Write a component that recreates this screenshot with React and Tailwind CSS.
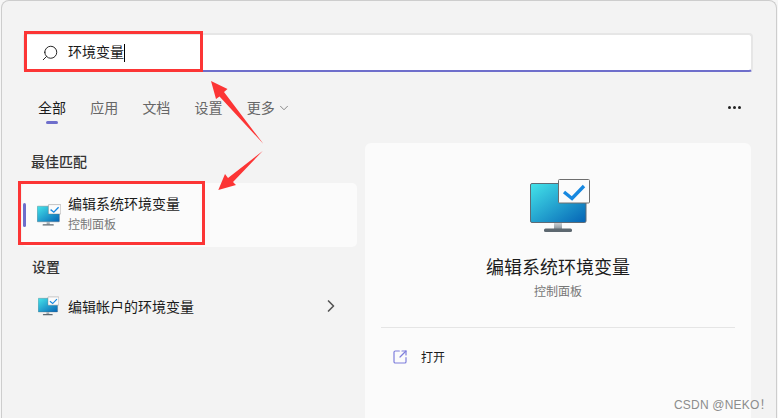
import React from 'react';
import { ChevronDown, ChevronRight, Search, SquareArrowOutUpRight } from 'lucide-react';

function MonitorIcon({ id, className }) {
  return (
    <svg viewBox="0 0 60 53" className={className}>
      <defs>
        <linearGradient id={id} x1="0" y1="0" x2="1" y2="1">
          <stop offset="0" stopColor="#44e4ea" />
          <stop offset="1" stopColor="#0563b5" />
        </linearGradient>
        <linearGradient id={id + 's'} x1="0" y1="0" x2="0" y2="1">
          <stop offset="0" stopColor="#d6dadd" />
          <stop offset="1" stopColor="#8a949c" />
        </linearGradient>
      </defs>
      <rect x="24" y="43" width="8" height="7" fill={`url(#${id}s)`} />
      <rect x="14" y="49.5" width="28" height="3.5" rx="1.5" fill="#5d6870" />
      <rect x="0.5" y="4.5" width="55.5" height="39" rx="1.5" fill={`url(#${id})`} stroke="#5f6b75" />
      <rect x="28.5" y="0.5" width="31" height="23.5" rx="1" fill="#fbfbfb" stroke="#6e6e6e" />
      <path d="M34 13l8 6.5 12-12.5" fill="none" stroke="#1788e0" strokeWidth="3.4" />
    </svg>
  );
}

function App() {
  const tabs = ['应用', '文档', '设置'];

  return (
    <div
      className="relative w-[778px] h-[418px] overflow-hidden bg-[#f6f6f6] text-[14px] text-[#1b1b1b]"
      style={{ fontFamily: '"Noto Sans CJK SC", "Noto Sans", sans-serif' }}
    >
      <div className="w-[776px] h-[418px] ml-px border border-b-0 border-[#cdcdcd] rounded-t-lg bg-[#f3f3f3] pt-[32px] pl-[21px]">
        {/* search box */}
        <div className="w-[730px] h-[39px] flex items-center pl-[16px] bg-white rounded-[4px] border-2 border-[#e6e6e6] border-b-[#6e6ecb]">
          <Search size={18} strokeWidth={1.3} className="-scale-x-100 text-[#222]" />
          <span className="ml-[9px] mb-[3px] text-[14px] leading-none">环境变量</span>
          <span className="w-px h-[18px] bg-black" />
        </div>

        {/* tabs */}
        <div className="flex items-center justify-between w-[728px] h-[22px] mt-[24px] pl-[15px] text-[#666]">
          <div className="flex items-center gap-[24.2px]">
            <div className="relative text-[#1b1b1b]">
              全部
              <span className="absolute left-[8px] top-[24px] w-[12px] h-[3px] rounded-full bg-[#6e6ecb]" />
            </div>
            {tabs.map((tab) => (
              <span key={tab}>{tab}</span>
            ))}
            <span className="flex items-center">
              更多
              <ChevronDown size={14} strokeWidth={1.3} className="ml-[2px] mt-[2px]" />
            </span>
          </div>
          <div className="flex gap-[2px] mr-[10px]">
            <span className="w-[3px] h-[3px] rounded-full bg-[#222]" />
            <span className="w-[3px] h-[3px] rounded-full bg-[#222]" />
            <span className="w-[3px] h-[3px] rounded-full bg-[#222]" />
          </div>
        </div>

        <div className="flex gap-[8px] mt-[26px]">
          {/* results */}
          <div className="w-[334px] shrink-0">
            <div className="pl-[8px] h-[20px] mt-[7px] leading-[20px] font-medium text-[#333]">最佳匹配</div>
            <div className="relative flex items-center h-[64px] mt-[12px] -ml-[1px] pl-[15px] rounded-[5px] bg-[#fbfbfb]">
              <span className="absolute left-[1px] top-[20px] w-[3px] h-[24px] rounded-full bg-[#6e6ecb]" />
              <MonitorIcon id="m1" className="w-[24px] h-[22px] shrink-0" />
              <div className="ml-[7px] mb-[2px]">
                <div className="leading-[20px]">编辑系统环境变量</div>
                <div className="text-[12px] leading-[22px] text-[#777]">控制面板</div>
              </div>
            </div>
            <div className="pl-[9px] mt-[9px] h-[20px] leading-[20px] font-medium text-[#333]">设置</div>
            <div className="flex items-center h-[20px] mt-[20px] pl-[15px]">
              <MonitorIcon id="m2" className="w-[21px] h-[20px] shrink-0" />
              <span className="ml-[9px]">编辑帐户的环境变量</span>
              <ChevronRight size={20} strokeWidth={2} className="ml-auto mr-[16px] text-[#555]" />
            </div>
          </div>

          {/* detail panel */}
          <div className="w-[386px] h-[275px] -mt-[1px] px-[16px] rounded-t-[6px] bg-[#fbfbfb]">
            <div className="flex flex-col items-center pt-[36px] h-[185px] border-b border-[#e5e5e5]">
              <MonitorIcon id="m3" className="w-[60px] h-[53px] ml-[4px]" />
              <div className="mt-[21px] text-[18px] leading-[26px]">编辑系统环境变量</div>
              <div className="mt-[4px] text-[12px] leading-[16px] text-[#777]">控制面板</div>
            </div>
            <div className="flex items-center h-[20px] mt-[19px] pl-[11px]">
              <SquareArrowOutUpRight size={16} strokeWidth={1.8} className="text-[#7f7fdc]" />
              <span className="ml-[13px] text-[12px]">打开</span>
            </div>
          </div>
        </div>
      </div>

      {/* screenshot annotations */}
      <div className="absolute left-[24px] top-[31px] w-[179px] h-[41px] border-[3px] border-[#fc3535]" />
      <div className="absolute left-[18px] top-[181px] w-[187px] h-[64px] border-[3px] border-[#fc3535]" />
      <svg className="absolute left-0 top-0 w-[778px] h-[418px] pointer-events-none" viewBox="0 0 778 418">
        <polygon points="211,81 227.5,89 224,92 263.5,144 219.5,96.5 216,99" fill="#fc3535" />
        <polygon points="218.3,190 225,174 228,178 262.7,151 233,182 236,185" fill="#fc3535" />
      </svg>
      <div
        className="absolute left-[674px] top-[398px] text-[12px] leading-[14px] tracking-[0.2px] text-[#8c8c8c]"
        style={{ fontFamily: '"Liberation Sans", "Noto Sans CJK SC", sans-serif' }}
      >
        CSDN @NEKO！
      </div>
    </div>
  );
}

export default App;
